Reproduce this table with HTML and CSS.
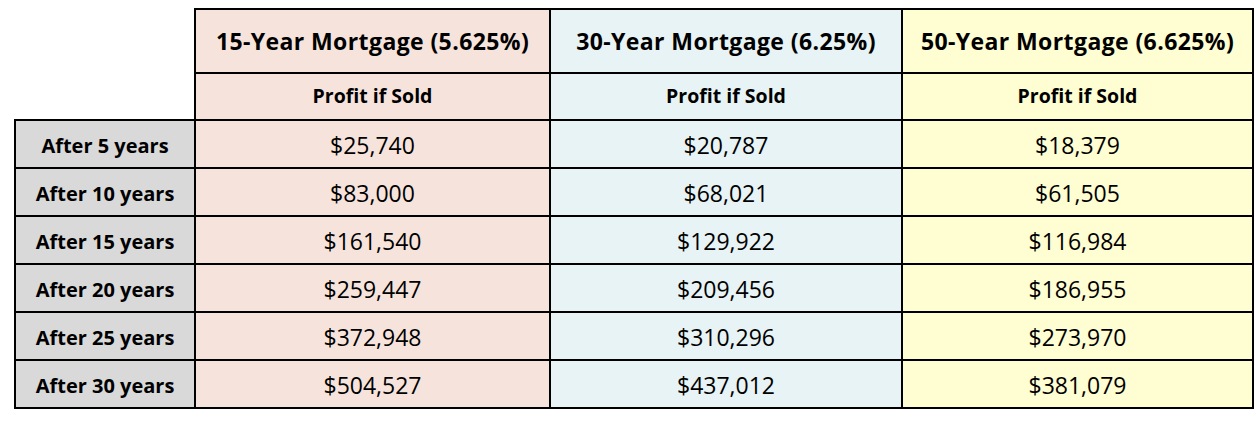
FILE: index.html
```html
<!DOCTYPE html>
<html>
<head>
<meta charset="utf-8">
<link rel="stylesheet" href="styles.css">
</head>
<body>
<table class="grid">
  <colgroup>
    <col class="c-label">
    <col class="c-15">
    <col class="c-30">
    <col class="c-50">
  </colgroup>
  <thead>
    <tr class="row-title">
      <th class="blank"></th>
      <th class="t15">15-Year Mortgage (5.625%)</th>
      <th class="t30">30-Year Mortgage (6.25%)</th>
      <th class="t50">50-Year Mortgage (6.625%)</th>
    </tr>
    <tr class="row-sub">
      <th class="blank"></th>
      <th class="t15">Profit if Sold</th>
      <th class="t30">Profit if Sold</th>
      <th class="t50">Profit if Sold</th>
    </tr>
  </thead>
  <tbody>
    <tr><th class="label">After 5 years</th><td class="t15">$25,740</td><td class="t30">$20,787</td><td class="t50">$18,379</td></tr>
    <tr><th class="label">After 10 years</th><td class="t15">$83,000</td><td class="t30">$68,021</td><td class="t50">$61,505</td></tr>
    <tr><th class="label">After 15 years</th><td class="t15">$161,540</td><td class="t30">$129,922</td><td class="t50">$116,984</td></tr>
    <tr><th class="label">After 20 years</th><td class="t15">$259,447</td><td class="t30">$209,456</td><td class="t50">$186,955</td></tr>
    <tr><th class="label">After 25 years</th><td class="t15">$372,948</td><td class="t30">$310,296</td><td class="t50">$273,970</td></tr>
    <tr><th class="label">After 30 years</th><td class="t15">$504,527</td><td class="t30">$437,012</td><td class="t50">$381,079</td></tr>
  </tbody>
</table>
</body>
</html>
```
FILE: styles.css
```css
html, body {
  margin: 0;
  background: #ffffff;
}
body {
  padding: 8px 0 0 14px;
  font-family: "Open Sans", "Lato", sans-serif;
  color: #000000;
}
.grid {
  border-collapse: collapse;
  table-layout: fixed;
  width: 1238px;
}
.c-label { width: 180px; }
.c-15 { width: 355px; }
.c-30 { width: 352px; }
.c-50 { width: 351px; }
.grid th, .grid td {
  border: 2px solid #000;
  text-align: center;
  vertical-align: middle;
  padding: 0;
  line-height: 1.15;
}
.grid th.blank {
  border: none;
  border-right: 2px solid #000;
  background: #fff;
}
.row-sub th.blank {
  border-bottom: 2px solid #000;
}
.row-title th {
  height: 62px;
  font-size: 23px;
  font-weight: 700;
  letter-spacing: 0.4px;
}
.row-sub th {
  height: 45px;
  font-size: 19.5px;
  font-weight: 700;
}
.grid tbody tr { height: 48px; }
.grid td {
  font-size: 23px;
  font-weight: 400;
  padding-top: 2px;
}
.grid th.label {
  background: #d9d9d9;
  font-size: 20px;
  font-weight: 700;
  padding-top: 2px;
}
.t15 { background: #f6e4dc; }
.t30 { background: #e7f3f4; }
.t50 { background: #fffdd2; }
```
